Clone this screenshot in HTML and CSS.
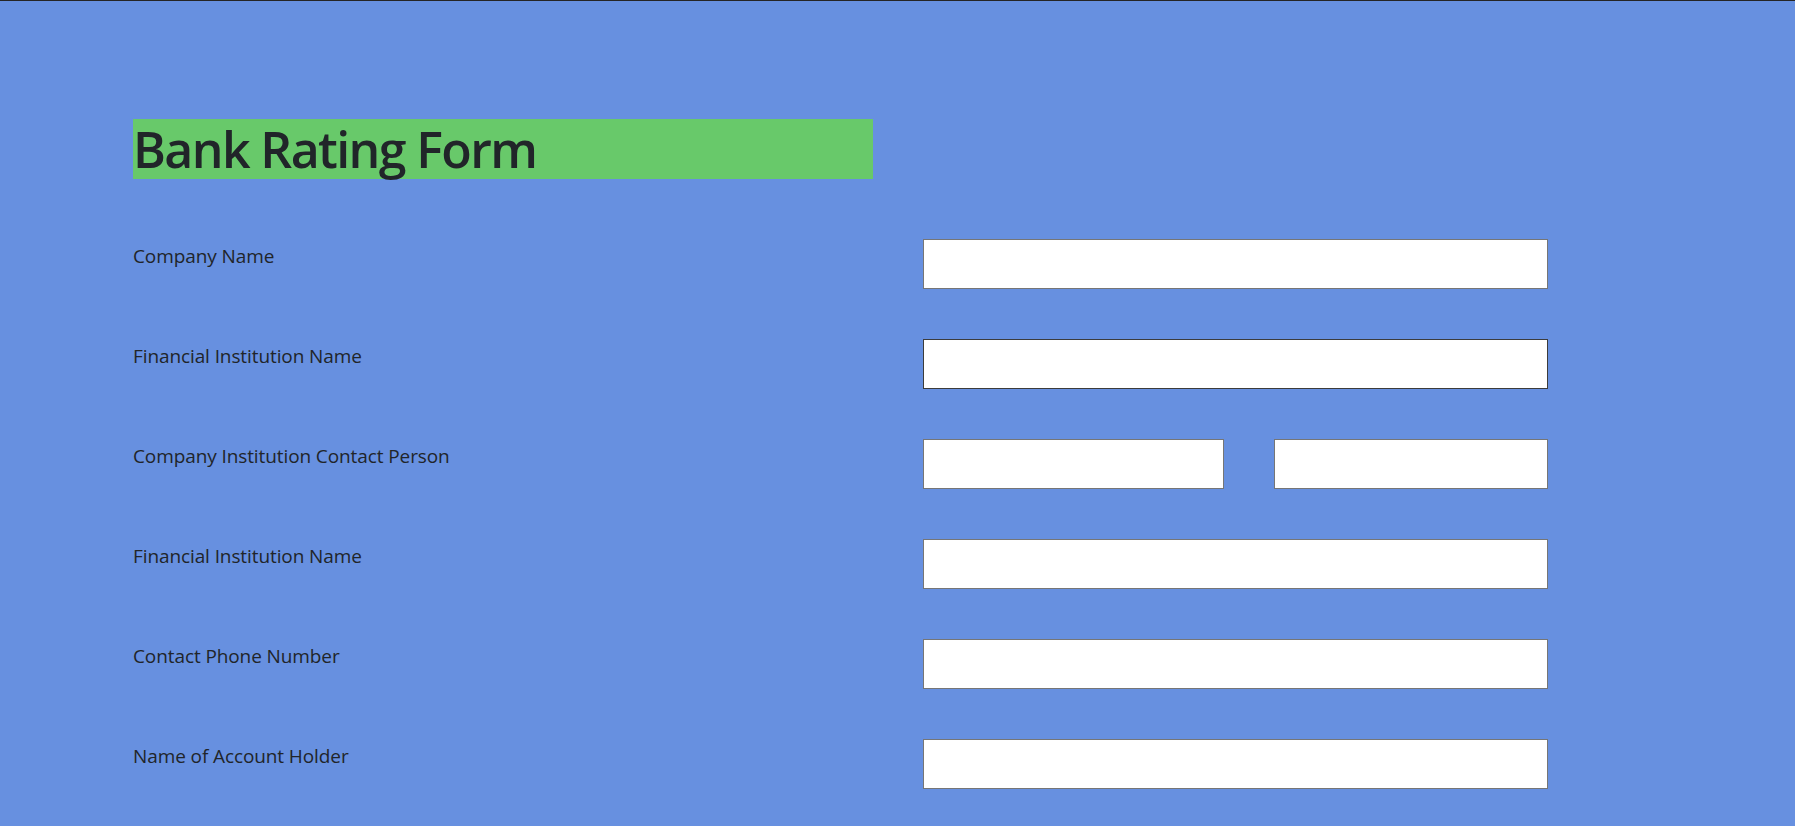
FILE: index.html
```html
<!DOCTYPE html>
<html lang="en">
<head>
<meta charset="utf-8">
<title>Bank Rating Form</title>
<link rel="stylesheet" href="styles.css">
</head>
<body>
<div class="topline"></div>
<main class="page">
  <h1 class="title">Bank Rating Form</h1>
  <form class="form">
    <div class="row">
      <label class="label">Company Name</label>
      <div class="field"><input class="input" type="text"></div>
    </div>
    <div class="row">
      <label class="label">Financial Institution Name</label>
      <div class="field"><input class="input input-dark" type="text"></div>
    </div>
    <div class="row">
      <label class="label">Company Institution Contact Person</label>
      <div class="field split"><input class="input first" type="text"><input class="input second" type="text"></div>
    </div>
    <div class="row">
      <label class="label">Financial Institution Name</label>
      <div class="field"><input class="input" type="text"></div>
    </div>
    <div class="row">
      <label class="label">Contact Phone Number</label>
      <div class="field"><input class="input" type="text"></div>
    </div>
    <div class="row">
      <label class="label">Name of Account Holder</label>
      <div class="field"><input class="input" type="text"></div>
    </div>
  </form>
</main>
</body>
</html>
```
FILE: styles.css
```css
html, body {
  margin: 0;
  padding: 0;
}
body {
  background: #6790e0;
  font-family: "Open Sans", "Noto Sans", sans-serif;
  color: #212529;
  min-height: 826px;
  overflow: hidden;
}
.topline {
  height: 1px;
  background: #252525;
}
.page {
  padding: 118px 0 0 133px;
}
.title {
  margin: 0;
  width: 740px;
  height: 60px;
  background: #68c96a;
  font-size: 50px;
  line-height: 60px;
  font-weight: 600;
  letter-spacing: -1.6px;
  white-space: nowrap;
}
.form {
  display: flex;
  flex-direction: column;
  gap: 50px;
  margin-top: 60px;
}
.row {
  display: grid;
  grid-template-columns: 790px 625px;
  height: 50px;
}
.label {
  font-size: 19px;
  line-height: 30px;
  padding-top: 2px;
  letter-spacing: -0.1px;
}
.field {
  display: flex;
}
.split {
  gap: 50px;
}
.input {
  box-sizing: border-box;
  width: 625px;
  height: 50px;
  margin: 0;
  border: 1px solid #767676;
  background: #fff;
  padding: 0 12px;
  font: inherit;
}
.input-dark {
  border-color: #3c3c3c;
}
.split .first {
  width: 301px;
}
.split .second {
  width: 274px;
}
```
